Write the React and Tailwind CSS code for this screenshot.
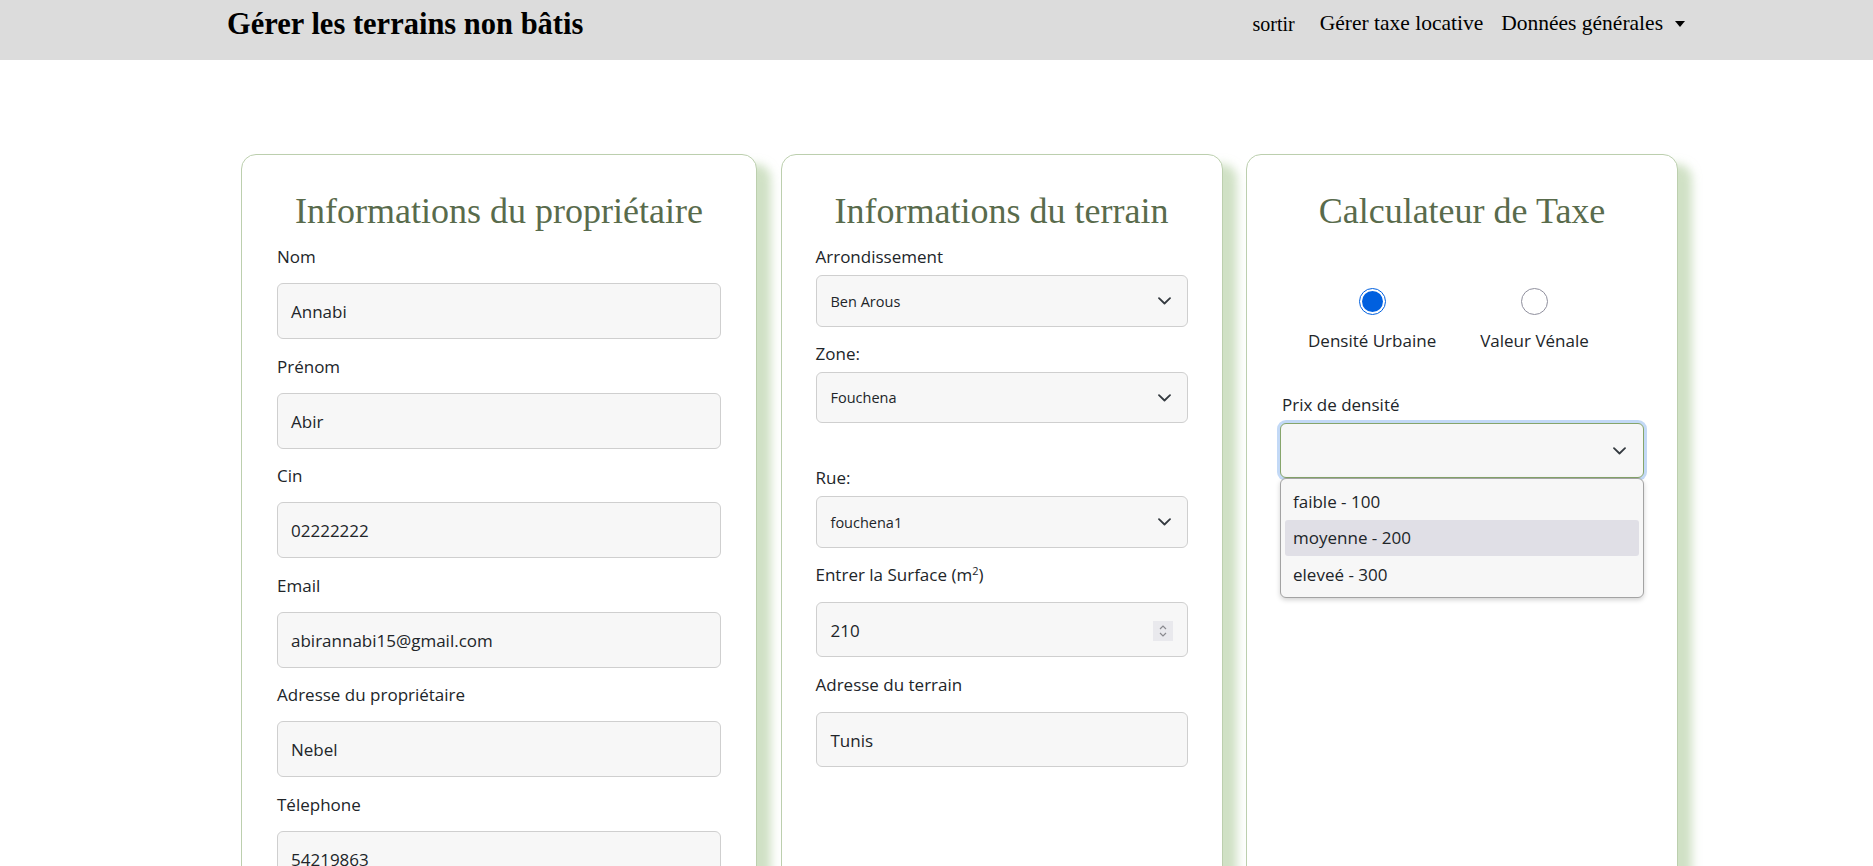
import React from "react";

const sans = "font-['Open_Sans',sans-serif]";
const serif = "font-['Liberation_Serif',serif]";

const Chevron = () => (
  <svg width="13" height="8" viewBox="0 0 13 8" fill="none">
    <path d="M1 1.2l5.5 5.3L12 1.2" stroke="#343a40" strokeWidth="1.8" strokeLinecap="round" strokeLinejoin="round" />
  </svg>
);

const Field = ({ label, value }) => (
  <div className="mb-[15.5px]">
    <div className="text-[17px] leading-6 text-[#212529] mb-[14px]">{label}</div>
    <div className="h-[56px] rounded-[6px] border border-[#cfcfcf] bg-[#f7f7f7] pl-[13px] pt-[2px] flex items-center text-[17px] text-[#212529]">
      {value}
    </div>
  </div>
);

const SelectBox = ({ value, h }) => (
  <div
    className={`${h} rounded-[6px] border border-[#cfcfcf] bg-[#f7f7f7] pl-[14px] pr-[16px] flex items-center justify-between text-[14.5px] text-[#212529]`}
  >
    <span className="pt-[1px]">{value}</span>
    <Chevron />
  </div>
);

const Card = ({ title, width, children, px = "px-[35px]" }) => (
  <div
    className={`${width} ${px} pt-[35px] pb-[40px] bg-white rounded-[15px] border border-[#bccfae] shadow-[14px_10px_10px_rgba(170,200,150,0.55)]`}
  >
    <h2 className={`${serif} text-[36px] leading-[43px] text-center text-[#596b4c] mb-[12px]`}>{title}</h2>
    {children}
  </div>
);

export default function App() {
  return (
    <div className={`${sans} min-h-screen bg-white`}>
      {/* Navbar */}
      <div className="h-[60px] bg-[#dcdcdc] flex items-center justify-between pl-[227px] pr-[188px] pb-[13px]">
        <h1 className={`${serif} text-[30.5px] leading-[36px] font-bold text-black`}>Gérer les terrains non bâtis</h1>
        <div className={`${serif} flex items-center text-black`}>
          <span className="text-[20px] mr-[25px]">sortir</span>
          <span className="text-[21.5px] mr-[18px]">Gérer taxe locative</span>
          <span className="text-[21.5px]">Données générales</span>
          <span className="ml-[12px] w-0 h-0 border-t-[6px] border-t-black border-x-[5px] border-x-transparent"></span>
        </div>
      </div>

      {/* Cards */}
      <div className="flex items-stretch gap-[23.5px] pl-[241px] mt-[94px]">
        <Card title="Informations du propriétaire" width="w-[516px]">
          <Field label="Nom" value="Annabi" />
          <Field label="Prénom" value="Abir" />
          <Field label="Cin" value="02222222" />
          <Field label="Email" value="abirannabi15@gmail.com" />
          <Field label="Adresse du propriétaire" value="Nebel" />
          <Field label="Télephone" value="54219863" />
        </Card>

        <Card title="Informations du terrain" width="w-[442px]" px="px-[34px]">
          <div className="text-[17px] leading-6 text-[#212529] mb-[6px]">Arrondissement</div>
          <SelectBox value="Ben Arous" h="h-[52px]" />
          <div className="text-[17px] leading-6 text-[#212529] mt-[15px] mb-[6px]">Zone:</div>
          <SelectBox value="Fouchena" h="h-[51px]" />
          <div className="text-[17px] leading-6 text-[#212529] mt-[43px] mb-[6px]">Rue:</div>
          <SelectBox value="fouchena1" h="h-[52px]" />
          <div className="text-[17px] leading-6 text-[#212529] mt-[14.5px] mb-[15.5px]">
            Entrer la Surface (m<sup className="text-[11px]">2</sup>)
          </div>
          <div className="h-[55px] rounded-[6px] border border-[#cfcfcf] bg-[#f7f7f7] pl-[14px] pr-[14px] pt-[2px] flex items-center justify-between text-[17px] text-[#212529]">
            <span>210</span>
            <span className="w-[20px] h-[20px] bg-[#e9e9ed] flex flex-col items-center justify-center gap-[2px]">
              <svg width="8" height="5" viewBox="0 0 8 5" fill="none">
                <path d="M1 4l3-3 3 3" stroke="#8a8a8f" strokeWidth="1.2" />
              </svg>
              <svg width="8" height="5" viewBox="0 0 8 5" fill="none">
                <path d="M1 1l3 3 3-3" stroke="#8a8a8f" strokeWidth="1.2" />
              </svg>
            </span>
          </div>
          <div className="text-[17px] leading-6 text-[#212529] mt-[15.5px] mb-[15.5px]">Adresse du terrain</div>
          <div className="h-[55px] rounded-[6px] border border-[#cfcfcf] bg-[#f7f7f7] pl-[14px] pt-[2px] flex items-center text-[17px] text-[#212529]">
            Tunis
          </div>
        </Card>

        <Card title="Calculateur de Taxe" width="w-[432px]">
          <div className="flex gap-[44px] pl-[26px] mt-[55px]">
            <div className="flex flex-col items-center">
              <span className="w-[27px] h-[27px] rounded-full border-[1.5px] border-[#0060df] bg-white flex items-center justify-center">
                <span className="w-[21px] h-[21px] rounded-full bg-[#0060df]"></span>
              </span>
              <span className="mt-[14px] text-[17px] leading-6 text-[#212529]">Densité Urbaine</span>
            </div>
            <div className="flex flex-col items-center">
              <span className="w-[27px] h-[27px] rounded-full border-[1.5px] border-[#8f8f9d] bg-white"></span>
              <span className="mt-[14px] text-[17px] leading-6 text-[#212529]">Valeur Vénale</span>
            </div>
          </div>
          <div className="text-[17px] leading-6 text-[#212529] mt-[40px] mb-[6px]">Prix de densité</div>
          <div className="relative -mx-[2px]">
            <div className="h-[55px] rounded-[6px] border border-[#86a56b] bg-[#f7f7f7] pr-[17px] flex items-center justify-end shadow-[0_0_0_3px_#c3d9f6]">
              <Chevron />
            </div>
            <div className="absolute left-0 right-0 top-full z-10 rounded-[6px] border border-[#a3a3a3] bg-[#f7f7f7] p-[4px] shadow-[0_2px_5px_rgba(0,0,0,0.18)] text-[17px] text-[#212529]">
              <div className="h-[36.5px] flex items-center pl-[8px]">faible - 100</div>
              <div className="h-[36.5px] flex items-center pl-[8px] bg-[#e0dfe6] rounded-[3px]">moyenne - 200</div>
              <div className="h-[36.5px] flex items-center pl-[8px]">eleveé - 300</div>
            </div>
          </div>
        </Card>
      </div>
    </div>
  );
}
